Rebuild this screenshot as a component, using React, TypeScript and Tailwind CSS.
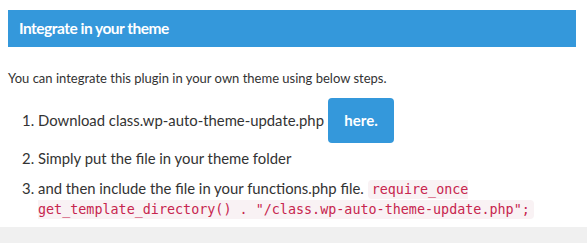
export default function App() {
  return (
    <div className="w-[587px] h-[243px] bg-white flex flex-col font-['Lato','Noto_Sans',sans-serif] text-[#333]">
      <div className="pl-2 pr-[11px] pt-[10px] flex-1">
        {/* Heading bar */}
        <div className="h-[37px] bg-[#3498db] flex items-center pl-[11px]">
          <h2 className="text-white font-bold text-[15.5px] tracking-[-0.5px] leading-none">Integrate in your theme</h2>
        </div>

        <p className="mt-[22px] text-[13px] leading-[18px]">You can integrate this plugin in your own theme using below steps.</p>

        <ol className="list-decimal pl-[30px] mt-[11px] text-[14.85px]">
          <li className="leading-[21px]">
            Download class.wp-auto-theme-update.php{' '}
            <a className="inline-block bg-[#3498db] text-white font-bold text-[15px] rounded-[4px] px-[16.5px] py-[12px] leading-[21px]">here.</a>
          </li>
          <li className="leading-[21px] mt-[5px]">Simply put the file in your theme folder</li>
          <li className="leading-[19px] mt-[10px]">
            and then include the file in your functions.php file.{' '}
            <code className="font-['DejaVu_Sans_Mono',monospace] text-[13.4px] text-[#c7254e] bg-[#f9f2f4] rounded-[4px] px-[4px] py-[2px]">
              require_once get_template_directory() . "/class.wp-auto-theme-update.php";
            </code>
          </li>
        </ol>
      </div>
      <div className="h-[16px] bg-[#f0f0f0]" />
    </div>
  );
}
